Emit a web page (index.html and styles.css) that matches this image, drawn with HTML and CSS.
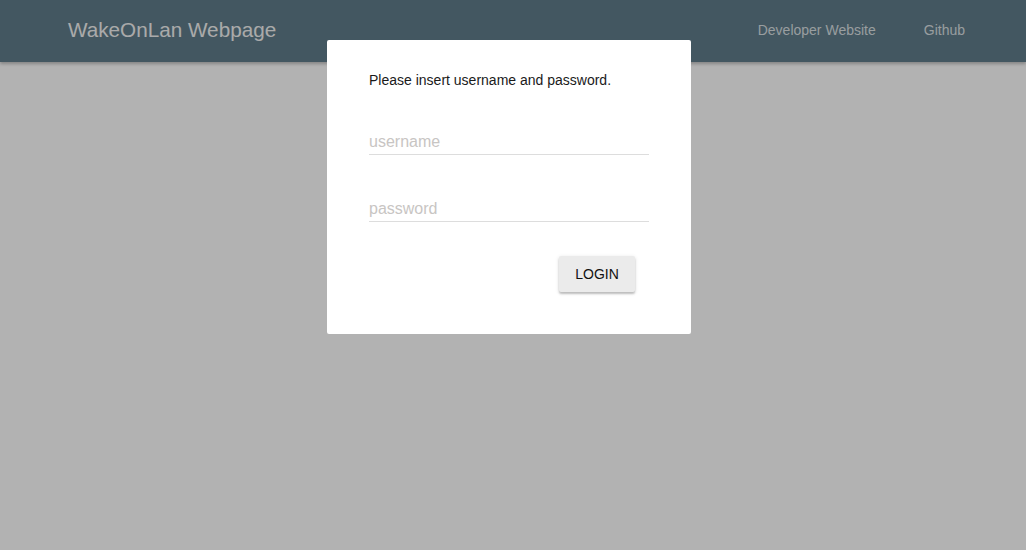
FILE: index.html
```html
<!DOCTYPE html>
<html>
<head>
<meta charset="utf-8">
<link rel="stylesheet" href="styles.css">
</head>
<body>
<nav class="navbar">
  <div class="brand">WakeOnLan Webpage</div>
  <div class="links">
    <a class="link">Developer Website</a>
    <a class="link">Github</a>
  </div>
</nav>
<main class="page"></main>
<div class="overlay"></div>
<div class="modal">
  <p class="prompt">Please insert username and password.</p>
  <div class="field"><input class="input" type="text" placeholder="username"></div>
  <div class="field"><input class="input" type="password" placeholder="password"></div>
  <div class="actions"><button class="btn">LOGIN</button></div>
</div>
</body>
</html>
```
FILE: styles.css
```css
html, body {
  margin: 0;
  padding: 0;
  height: 100%;
}
body {
  background: #ffffff;
  font-family: "Liberation Sans", Arial, sans-serif;
  overflow: hidden;
}
.navbar {
  height: 62px;
  background: #607d8b;
  display: flex;
  align-items: center;
  justify-content: space-between;
  padding: 0 61px 0 68px;
  box-shadow: 0 2px 3px rgba(0,0,0,0.25);
}
.brand {
  color: #f4f4f4;
  font-size: 20.7px;
  margin-top: -2px;
}
.links {
  display: flex;
  gap: 48px;
  margin-top: -2px;
}
.link {
  color: rgba(255,255,255,0.78);
  font-size: 14px;
}
.overlay {
  position: fixed;
  inset: 0;
  background: rgba(0,0,0,0.3);
}
.modal {
  position: absolute;
  left: 327px;
  top: 40px;
  height: 294px;
  box-sizing: border-box;
  width: 364px;
  padding: 32px 42px 0 42px;
  background: #fff;
  border-radius: 2px;
}
.prompt {
  margin: 0;
  font-size: 14px;
  line-height: 16px;
  color: #1a1a1a;
}
.prompt + .field {
  margin-top: 42px;
}
.field + .field {
  margin-top: 42px;
}
.input {
  display: block;
  width: 100%;
  box-sizing: border-box;
  border: none;
  border-bottom: 1px solid #dddddd;
  outline: none;
  padding: 0;
  height: 25px;
  font-family: "Liberation Sans", Arial, sans-serif;
  font-size: 16px;
  color: #333;
  background: transparent;
}
.input::placeholder {
  color: #c8c5c3;
}
.actions {
  display: flex;
  justify-content: flex-end;
  padding-right: 14px;
  margin-top: 34px;
}
.btn {
  width: 76px;
  height: 36px;
  border: none;
  border-radius: 2px;
  background: #ebebeb;
  font-family: "Liberation Sans", Arial, sans-serif;
  font-size: 14px;
  color: #111;
  box-shadow: 0 2px 2px rgba(0,0,0,0.2), 0 1px 4px rgba(0,0,0,0.12);
  padding: 0;
}
```
